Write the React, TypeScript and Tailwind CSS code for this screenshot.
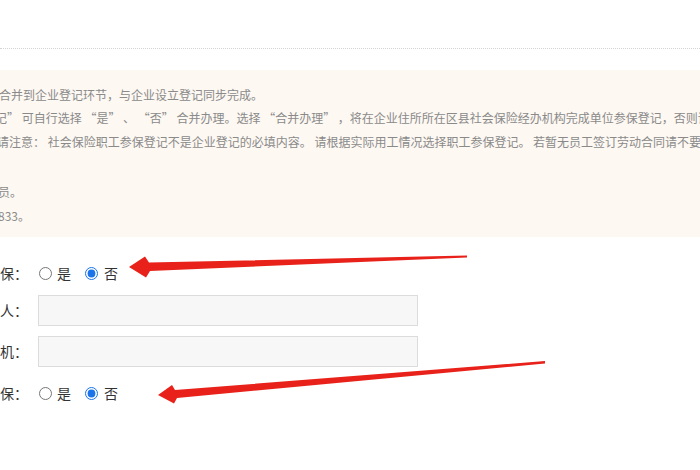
import React from 'react';

const notice = [
  { text: '合并到企业登记环节，与企业设立登记同步完成。', cls: '-ml-[1px] h-[23px]' },
  { text: '记” 可自行选择 “是” 、 “否” 合并办理。选择 “合并办理” ，将在企业住所所在区县社会保险经办机构完成单位参保登记，否则请', cls: '-ml-[5px] h-[24px]' },
  { text: '请注意： 社会保险职工参保登记不是企业登记的必填内容。 请根据实际用工情况选择职工参保登记。 若暂无员工签订劳动合同请不要', cls: '-ml-[3px] h-[24px]' },
  { text: '', cls: 'h-[26px]' },
  { text: '员。', cls: '-ml-[2px] h-[24px]' },
  { text: '833。', cls: '-ml-[2px] h-[24px]' },
];

function Label({ text }: { text: string }) {
  return (
    <div className="w-[28px] flex justify-end whitespace-nowrap text-[14px] text-[#333]">
      {text}
    </div>
  );
}

function RadioRow({ label, name }: { label: string; name: string }) {
  return (
    <div className="h-[36px] flex items-center">
      <Label text={label} />
      <input type="radio" name={name} className="m-0 ml-[11px] w-[13px] h-[13px] accent-[#1a73e8]" />
      <span className="ml-[5px] text-[14px] text-[#333]">是</span>
      <input type="radio" name={name} defaultChecked className="m-0 ml-[14px] w-[13px] h-[13px] accent-[#1a73e8]" />
      <span className="ml-[6px] text-[14px] text-[#333]">否</span>
    </div>
  );
}

function InputRow({ label }: { label: string }) {
  return (
    <div className="h-[31px] flex items-center">
      <Label text={label} />
      <input type="text" className="ml-[10px] w-[380px] h-[31px] bg-[#f7f7f7] border border-[#dcdcdc] outline-none" />
    </div>
  );
}

export default function App() {
  return (
    <div
      className="relative w-[700px] h-[470px] overflow-hidden bg-white"
      style={{ fontFamily: '"Noto Sans CJK SC", "Noto Sans", sans-serif' }}
      lang="zh-CN"
    >
      <div className="pt-[48px]">
        <div className="border-t border-dotted border-[#d4d4d4]" />
      </div>

      <div className="mt-[21px] h-[167px] bg-[#fdf8f2] pt-[13px]">
        {notice.map((line, i) => (
          <div key={i} className={`leading-[24px] text-[12px] text-[#8a8a8a] whitespace-pre ${line.cls}`}>
            {line.text}
          </div>
        ))}
      </div>

      <div className="pt-[18px] flex flex-col">
        <RadioRow label="单位参保：" name="unit" />
        <div className="mt-[4px]">
          <InputRow label="联系人：" />
        </div>
        <div className="mt-[10px]">
          <InputRow label="联系手机：" />
        </div>
        <div className="mt-[8px]">
          <RadioRow label="职工参保：" name="staff" />
        </div>
      </div>

      <svg className="absolute inset-0 pointer-events-none" width="700" height="470" viewBox="0 0 700 470">
        <polygon
          points="129,267 145,256.5 149,262.5 467,255.5 467,257.5 150,271 146,277.5"
          fill="#e8221a"
        />
        <polygon
          points="158,395 172,385 175,390 545,361 545,363.5 177,398 174,403.5"
          fill="#e8221a"
        />
      </svg>
    </div>
  );
}
